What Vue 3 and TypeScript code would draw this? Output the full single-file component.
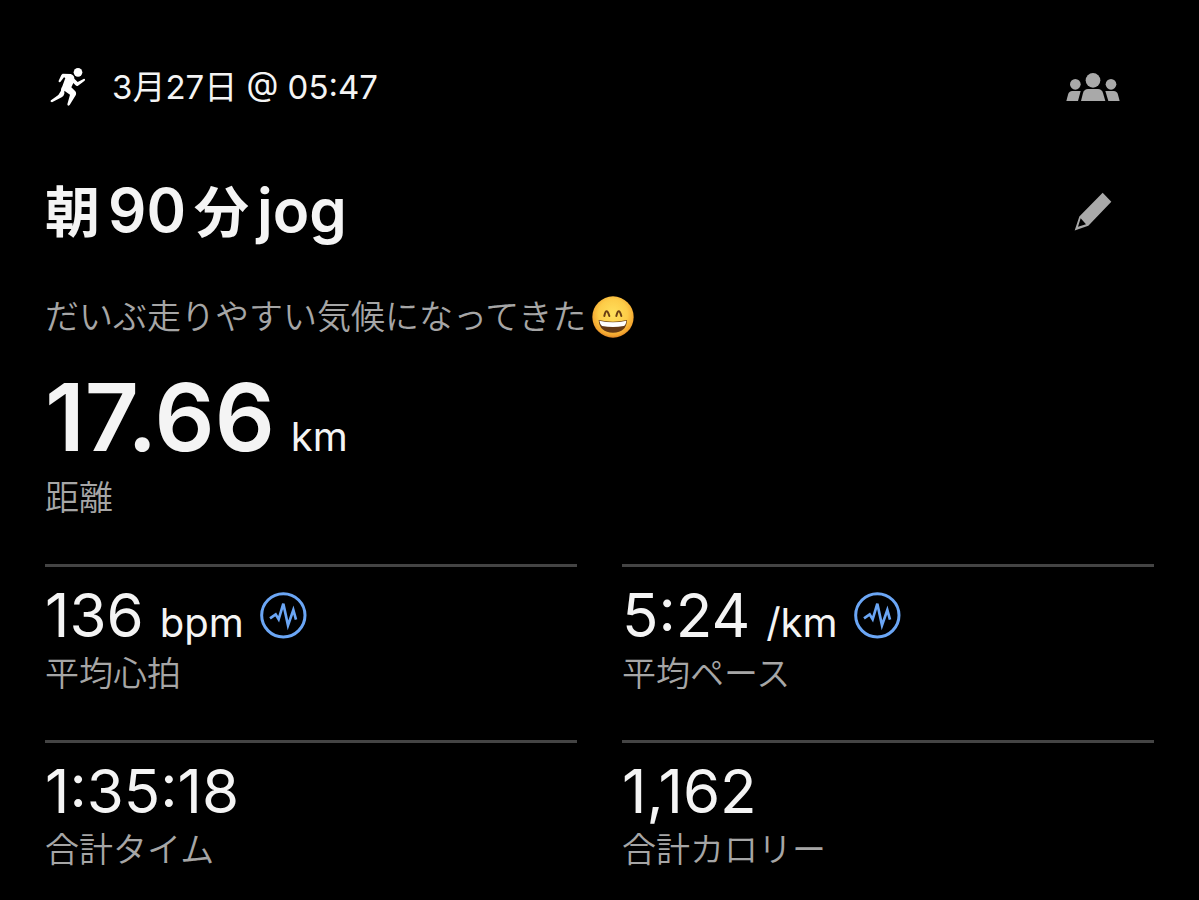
<script setup lang="ts">
interface Stat {
  label: string
  value: string
  unit?: string
  analysis?: boolean
}

const activity = {
  date: '3月27日 @ 05:47',
  title: '朝90分jog',
  note: 'だいぶ走りやすい気候になってきた',
  distance: '17.66',
}

// Splits the title into runs of Latin and Japanese text so they can be spaced apart.
const titleRuns = (activity.title.match(/[\x20-\x7e]+|[^\x20-\x7e]+/g) ?? []).map((text) => ({
  text,
  japanese: /[^\x20-\x7e]/.test(text),
}))

const stats: Stat[] = [
  { label: '平均心拍', value: '136', unit: 'bpm', analysis: true },
  { label: '平均ペース', value: '5:24', unit: '/km', analysis: true },
  { label: '合計タイム', value: '1:35:18' },
  { label: '合計カロリー', value: '1,162' },
]
</script>

<template>
  <main class="activity">
    <header class="row meta">
      <svg class="runner" viewBox="0 0 111 120" aria-hidden="true">
        <circle cx="84" cy="16" r="13" />
        <path
          d="M38 20 L62 21 Q74 26 73 35 L83 45 L102 35 Q107 36 104 41 L84 56 Q80 58 76 54 L70 48 L64 61 L76 73 Q80 78 77 85 L59 114 Q53 119 52 112 L60 83 L43 71 L43 80 Q41 88 35 91 L6 106 Q-1 105 3 100 L25 84 L33 71 Q32 65 37 58 L46 33 L42 31 L31 45 Q25 47 26 41 L34 24 Z"
        />
      </svg>
      <time class="date">{{ activity.date }}</time>
      <button class="action" type="button" aria-label="共有">
        <svg class="group" viewBox="0 0 162 84" aria-hidden="true">
          <circle cx="81" cy="22" r="22" />
          <circle cx="28" cy="34" r="16" />
          <circle cx="135" cy="34" r="16" />
          <path d="M45 84 L51 60 Q55 48 66 48 H96 Q107 48 111 60 L118 84 Z" />
          <path d="M1 84 L6 65 Q9 54 19 54 H44 L36 84 Z" />
          <path d="M161 84 L156 65 Q153 54 143 54 H118 L127 84 Z" />
        </svg>
      </button>
    </header>

    <div class="row heading">
      <h1 class="title">
        <span v-for="run in titleRuns" :key="run.text" :class="{ japanese: run.japanese }">{{ run.text }}</span>
      </h1>
      <button class="action" type="button" aria-label="編集">
        <svg class="pencil" viewBox="0 0 114 116" aria-hidden="true">
          <path
            fill-rule="evenodd"
            d="M86 2 L112 29 L43 101 L2 115 L16 73 Z M20 78 L12 104 L36 96 Z"
          />
        </svg>
      </button>
    </div>

    <p class="note">
      <span>{{ activity.note }}</span>
      <svg class="smile" viewBox="0 0 126 126" role="img" aria-label="笑顔">
        <defs>
          <radialGradient id="face" cx="50%" cy="42%" r="58%">
            <stop offset="0" stop-color="#ffe05c" />
            <stop offset="0.6" stop-color="#fdcc48" />
            <stop offset="0.9" stop-color="#f3a52f" />
            <stop offset="1" stop-color="#dd8426" />
          </radialGradient>
        </defs>
        <circle cx="63" cy="63" r="62" fill="url(#face)" />
        <path
          d="M37 60 Q43 32 52 60 M73 60 Q80 32 88 60"
          fill="none"
          stroke="#6b3f13"
          stroke-width="6"
          stroke-linecap="round"
        />
        <path d="M20 72 Q63 82 105 72 Q104 109 63 110 Q22 109 20 72 Z" fill="#643915" />
        <path d="M22 74 Q63 84 103 74 Q102 87 95 90 Q63 96 30 90 Q24 86 22 74 Z" fill="#fff" />
      </svg>
    </p>

    <dl class="stats">
      <div class="stat main">
        <dt class="label">距離</dt>
        <dd class="reading">
          <span class="value">{{ activity.distance }}</span>
          <span class="unit">km</span>
        </dd>
      </div>
      <div v-for="stat in stats" :key="stat.label" class="stat cell">
        <dt class="label">{{ stat.label }}</dt>
        <dd class="reading">
          <span class="value">{{ stat.value }}</span>
          <span v-if="stat.unit" class="unit">{{ stat.unit }}</span>
          <button v-if="stat.analysis" class="analysis" type="button" :aria-label="stat.label + 'の分析'">
            <svg viewBox="0 0 141 141" aria-hidden="true">
              <circle cx="70" cy="70" r="65" stroke-width="9" />
              <path d="M30 79 L47 67 L56 82 L70 35 L84 100 L100 54 L108 83" stroke-width="8" />
            </svg>
          </button>
        </dd>
      </div>
    </dl>
  </main>
</template>

<style>
body {
  margin: 0;
  background: #000;
}
</style>

<style scoped>
.activity {
  box-sizing: border-box;
  min-height: 100vh;
  padding: 57px 45px 24px;
  background: #000;
  color: #f4f4f4;
  font-family: Inter, 'Noto Sans CJK JP', sans-serif;
}

.row {
  display: flex;
  align-items: center;
  min-height: 60px;
}

.runner {
  width: 37px;
  height: 40px;
  margin-left: 5px;
  fill: #fff;
}

.date {
  margin-left: 25px;
  font-size: 33px;
  line-height: 40px;
}

.action {
  display: flex;
  align-items: center;
  justify-content: center;
  width: 60px;
  height: 60px;
  margin: 0 31px 0 auto;
  padding: 0;
  border: 0;
  background: none;
  fill: #a9a9a9;
  cursor: pointer;
}

.group {
  width: 54px;
  height: 28px;
}

.pencil {
  width: 38px;
  height: 39px;
}

.heading {
  margin-top: 63px;
}

.title {
  display: flex;
  align-items: baseline;
  gap: 8px;
  margin: 0;
  font-size: 60px;
  font-weight: 600;
  line-height: 60px;
}

.japanese {
  font-size: 55px;
}

.note {
  display: flex;
  align-items: center;
  gap: 6px;
  margin: 50px 0 0;
  color: #a6a6a6;
  font-size: 34px;
  font-weight: 350;
  line-height: 50px;
}

.smile {
  flex: none;
  width: 42px;
  height: 42px;
}

.stats {
  display: grid;
  grid-template-columns: 1fr 1fr;
  gap: 41px 45px;
  margin: 28px 0 0;
}

.stat {
  display: flex;
  flex-direction: column-reverse;
  justify-content: flex-end;
}

.main {
  grid-column: 1 / -1;
  gap: 9px;
}

.cell {
  gap: 4px;
  padding-top: 18px;
  border-top: 3px solid #444;
}

.reading {
  display: flex;
  align-items: baseline;
  margin: 0;
}

.value {
  font-size: 60px;
  line-height: 60px;
}

.main .value {
  font-size: 94px;
  font-weight: 600;
  line-height: 94px;
}

.unit {
  margin-left: 16px;
  font-size: 40px;
  line-height: 40px;
}

.analysis {
  align-self: center;
  width: 47px;
  height: 47px;
  margin-left: 16px;
  padding: 0;
  border: 0;
  background: none;
  cursor: pointer;
}

.analysis svg {
  display: block;
  width: 47px;
  height: 47px;
  fill: none;
  stroke: #6ba6f5;
}

.label {
  color: #a6a6a6;
  font-size: 34px;
  font-weight: 350;
  line-height: 50px;
}
</style>
